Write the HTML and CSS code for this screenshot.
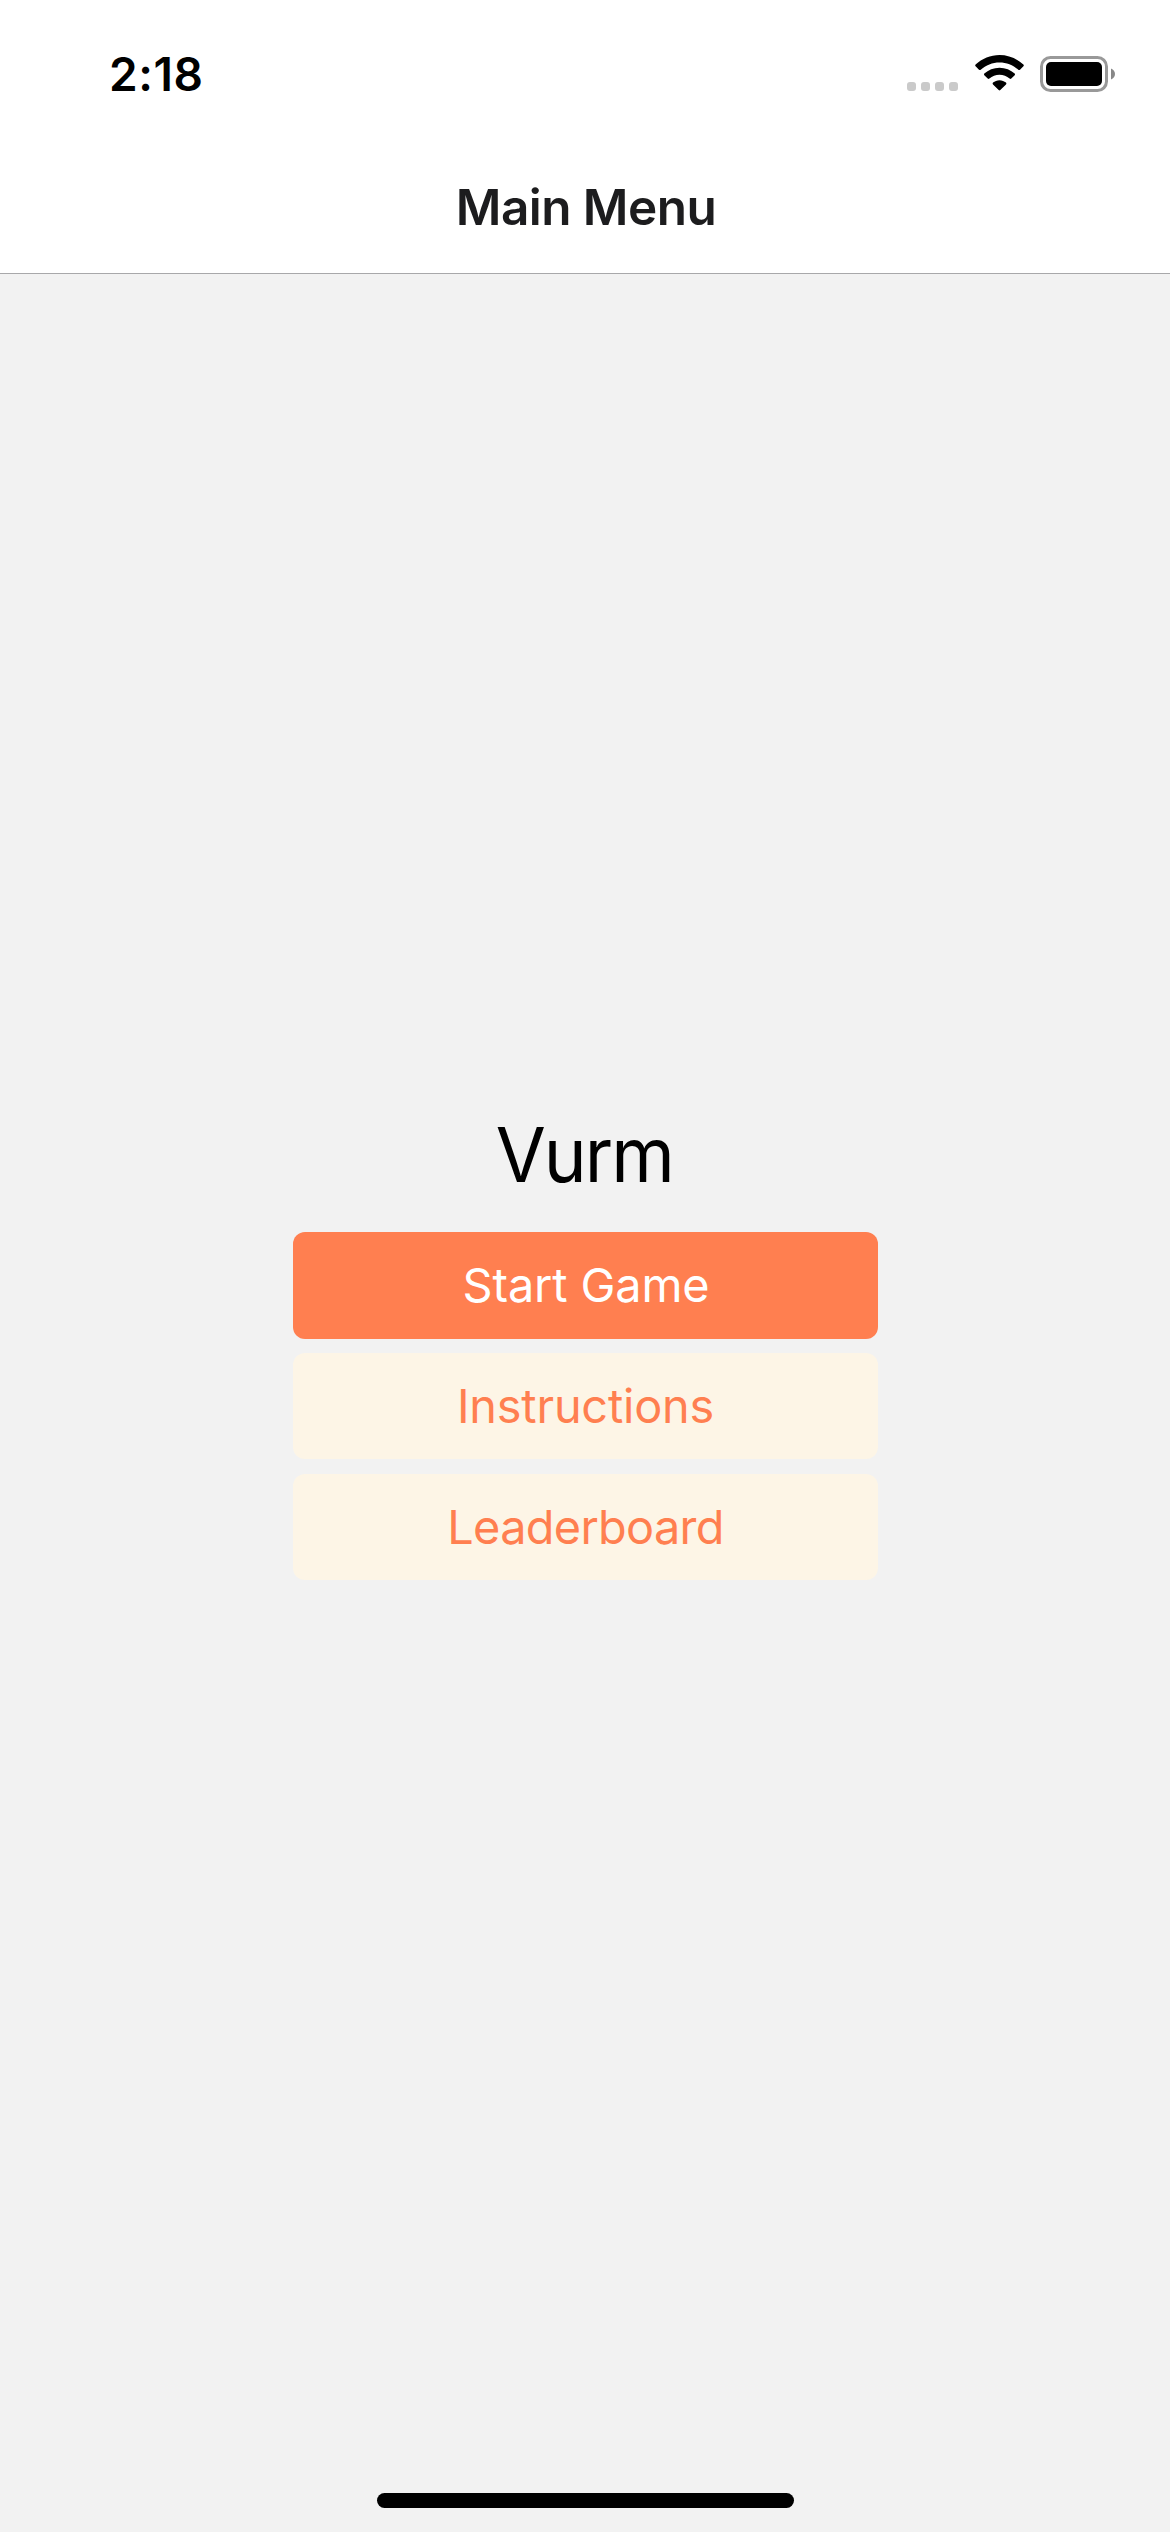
FILE: index.html
```html
<!DOCTYPE html>
<html lang="en">
<head>
<meta charset="utf-8">
<title>Main Menu</title>
<link rel="stylesheet" href="styles.css">
</head>
<body>
<div class="screen">
  <header class="header">
    <div class="status-bar">
      <span class="time">2:18</span>
      <div class="indicators">
        <svg class="signal" width="51" height="9" viewBox="0 0 51 9" fill="#cacaca"><rect width="9" height="9" rx="3"/><rect x="14" width="9" height="9" rx="3"/><rect x="28" width="9" height="9" rx="3"/><rect x="42" width="9" height="9" rx="3"/></svg>
        <svg class="wifi" width="49" height="36" viewBox="0 0 49 36"><path d="M24.5 0C15.600 0 7 3.500.600 9.600Q-.200 10.400.600 11.200L4 14.700Q4.900 15.500 5.700 14.700C10.800 10 17.500 7.400 24.500 7.400S38.200 10 43.300 14.700Q44.100 15.500 45 14.700L48.400 11.200Q49.200 10.400 48.400 9.600C42 3.500 33.400 0 24.500 0Z"/><path d="M24.500 12.700C18.600 12.700 13.300 14.900 9.300 18.600Q8.500 19.400 9.300 20.200L12.700 23.600Q13.500 24.400 14.400 23.600C17.200 21.100 20.700 19.800 24.500 19.800S31.800 21.100 34.600 23.600Q35.500 24.400 36.300 23.600L39.700 20.200Q40.500 19.400 39.700 18.600C35.700 14.900 30.400 12.700 24.500 12.700Z"/><path d="M24.500 25.200C22 25.200 19.800 26.100 18 27.600Q17.100 28.500 18 29.400L23.700 35.100Q24.500 35.900 25.300 35.100L31 29.400Q31.900 28.500 31 27.600C29.200 26.100 27 25.200 24.500 25.200Z"/></svg>
        <svg class="battery" width="75" height="36" viewBox="0 0 75 36"><rect x="1.500" y="1.500" width="65" height="33" rx="9" fill="none" stroke="#999" stroke-width="3"/><rect x="6" y="6" width="56" height="24" rx="5"/><path d="M71 12.500C73.500 13.500 75 15.500 75 18S73.500 22.500 71 23.500Z" fill="#888"/></svg>
      </div>
    </div>
    <h1 class="title">Main Menu</h1>
  </header>
  <main class="menu">
    <h2 class="name">Vurm</h2>
    <button class="button primary">Start Game</button>
    <button class="button instructions">Instructions</button>
    <button class="button leaderboard">Leaderboard</button>
  </main>
  <footer class="footer"><div class="home-indicator"></div></footer>
</div>
</body>
</html>
```
FILE: styles.css
```css
* { box-sizing: border-box; margin: 0; padding: 0; }
body { font-family: Inter, "Liberation Sans", sans-serif; }
.screen { width: 1170px; height: 2532px; display: flex; flex-direction: column; background: #f2f2f2; }
.header { height: 274px; background: #fff; border-bottom: 1px solid #a8a8aa; display: flex; flex-direction: column; }
.status-bar { height: 141px; padding: 46px 55px 0 109px; display: flex; justify-content: space-between; align-items: flex-start; }
.time { font-size: 46px; font-weight: 600; line-height: 56px; letter-spacing: 0.550px; }
.indicators { display: flex; align-items: flex-end; padding-top: 9px; }
.signal { margin: 0 17px 1px 0; }
.wifi { margin: 0 16px 1px 0; }
.title { height: 132px; line-height: 132px; padding-left: 2px; text-align: center; font-size: 49.500px; font-weight: 600; letter-spacing: -0.560px; color: #1c1c1e; }
.menu { flex: 1; display: flex; flex-direction: column; align-items: center; padding: 834px 0 0 1px; }
.name { height: 93px; line-height: 93px; margin-bottom: 31px; padding-right: 3px; font-size: 75.600px; font-weight: 400; letter-spacing: -2.100px; transform: scaleX(0.96); }
.button { width: 585px; height: 107px; margin-bottom: 14px; border: 0; border-radius: 12px; background: #fdf5e6; color: #ff7f50; font: 400 46.800px/107px Inter, "Liberation Sans", sans-serif; text-align: center; }
.primary { background: #ff7f50; color: #fff; letter-spacing: -0.130px; padding-left: 1px; }
.instructions { height: 106px; margin-bottom: 15px; letter-spacing: -0.190px; }
.leaderboard { height: 106px; letter-spacing: -0.660px; }
.footer { height: 39px; display: flex; justify-content: center; }
.home-indicator { width: 417px; height: 15px; border-radius: 8px; background: #000; }
```
